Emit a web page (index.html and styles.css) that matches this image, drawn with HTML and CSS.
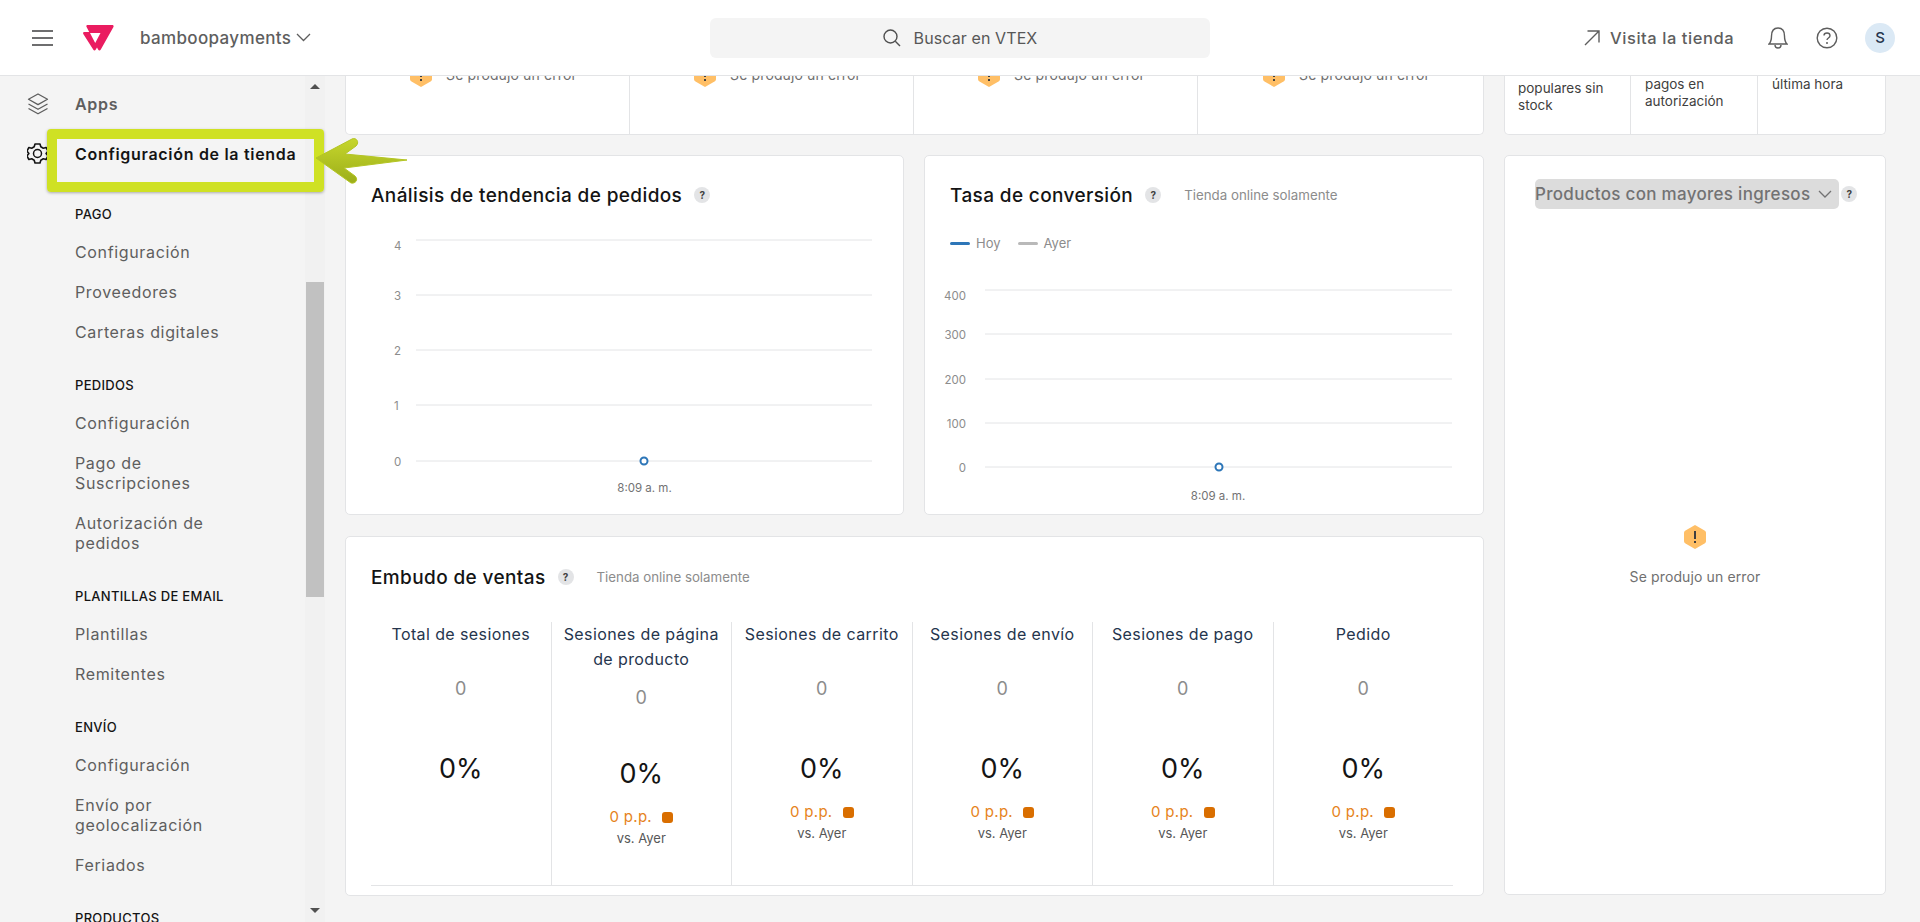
FILE: index.html
```html
<!DOCTYPE html>
<html lang="es">
<head>
    <meta charset="UTF-8">
    <meta name="viewport" content="width=device-width, initial-scale=1.0">
    <title>VTEX Admin</title>
    <link rel="stylesheet" href="styles.css">
</head>
<body>
    <!-- Top bar -->
    <header class="topbar">
        <div class="topbar-left">
            <svg class="menu-icon" width="22" height="16" viewBox="0 0 22 16"><path d="M0 1h21M0 8h21M0 15h21" stroke="#3f3f40" stroke-width="1.6" fill="none"/></svg>
            <svg class="logo" width="31" height="26" viewBox="0 0 31 26"><path fill-rule="evenodd" fill="#ea1c60" d="M4.5 0H29c1.5 0 2 1 1.300 2.300L17.800 24.500c-.8 1.400-2 1.300-2.700.1L14 22.500l-1.200 2.100c-.7 1.200-1.900 1.200-2.600 0L.3 9C-.2 8 .3 7 1.400 7h4.800L3.600 2C3.100 1 3.500 0 4.500 0zM7 8l5.200 10L17.500 8z"/></svg>
            <span class="brand">bamboopayments</span>
            <svg width="15" height="9" viewBox="0 0 15 9"><path d="M1 1l6.500 6.500L14 1" stroke="#5e5e5e" stroke-width="1.300" fill="none"/></svg>
        </div>
        <div class="search">
            <svg width="18" height="18" viewBox="0 0 18 18"><circle cx="7.500" cy="7.500" r="6.500" stroke="#4f4f4f" stroke-width="1.400" fill="none"/><path d="M12.300 12.300L17 17" stroke="#4f4f4f" stroke-width="1.400"/></svg>
            <span>Buscar en VTEX</span>
        </div>
        <div class="topbar-right">
            <a class="visit">
                <svg width="16" height="16" viewBox="0 0 16 16"><path d="M1 15L15 1M3.500 1H15v11.500" stroke="#5e5e5e" stroke-width="1.400" fill="none"/></svg>
                Visita la tienda
            </a>
            <svg class="bell" width="20" height="22" viewBox="0 0 20 22"><path d="M1 17c2-2 2.500-3.500 2.500-8C3.500 4 6 1 10 1s6.500 3 6.500 8c0 4.500.5 6 2.500 8zM7 18c0 4 6 4 6 0" stroke="#5e5e5e" stroke-width="1.400" fill="none"/></svg>
            <svg class="help" width="22" height="22" viewBox="0 0 22 22"><circle cx="11" cy="11" r="9.800" stroke="#5e5e5e" stroke-width="1.400" fill="none"/><path d="M8 8.500C8 6.500 9.500 6 11 6s3 1 3 2.700c0 2.300-3 2.300-3 4.300" stroke="#5e5e5e" stroke-width="1.400" fill="none"/><circle cx="11" cy="16" r="1" fill="#5e5e5e"/></svg>
            <div class="avatar">S</div>
        </div>
    </header>

    <div class="layout">
        <!-- Side menu -->
        <aside class="sidebar">
            <nav class="side-menu">
                <div class="side-main">
                    <svg width="22" height="22" viewBox="0 0 22 22"><path d="M11 1l9.500 5.300L11 11.600 1.500 6.300zM1.500 11L11 16.300 20.500 11M1.500 15.500L11 20.800l9.500-5.300" stroke="#5e5e5e" stroke-width="1.300" fill="none" stroke-linejoin="round"/></svg>
                    <span>Apps</span>
                </div>
                <div class="side-main side-active">
                    <svg width="22" height="22" viewBox="0 0 22 22"><path d="M8.500 1.500h5l.8 2.800 2.500 1.400 2.800-.7 2 3.600-2 2.400 2 2.400-2 3.600-2.800-.7-2.500 1.400-.8 2.800h-5l-.8-2.800-2.500-1.400-2.800.7-2-3.600 2-2.400-2-2.400 2-3.600 2.800.7 2.500-1.400z" transform="translate(-.5 -.5)" stroke="#141414" stroke-width="1.600" fill="none" stroke-linejoin="round"/><circle cx="10.500" cy="10.500" r="4" stroke="#141414" stroke-width="1.500" fill="none"/></svg>
                    <span>Configuración de la tienda</span>
                </div>

                <h4 class="side-title">PAGO</h4>
                <a class="side-link">Configuración</a>
                <a class="side-link">Proveedores</a>
                <a class="side-link">Carteras digitales</a>

                <h4 class="side-title">PEDIDOS</h4>
                <a class="side-link">Configuración</a>
                <a class="side-link">Pago de<br>Suscripciones</a>
                <a class="side-link">Autorización de<br>pedidos</a>

                <h4 class="side-title">PLANTILLAS DE EMAIL</h4>
                <a class="side-link">Plantillas</a>
                <a class="side-link">Remitentes</a>

                <h4 class="side-title">ENVÍO</h4>
                <a class="side-link">Configuración</a>
                <a class="side-link">Envío por<br>geolocalización</a>
                <a class="side-link">Feriados</a>

                <h4 class="side-title">PRODUCTOS</h4>
            </nav>
            <div class="scrollbar">
                <span class="scroll-up"></span>
                <span class="scroll-thumb"></span>
                <span class="scroll-down"></span>
            </div>
        </aside>

        <main class="content">
            <div class="left-col">
                <!-- Cards cut off by the top bar -->
                <section class="card status-row">
                    <div class="status-cell"><svg class="warn" viewBox="0 0 22 24"><use href="#warn-shape"/></svg><span>Se produjo un error</span></div>
                    <div class="status-cell"><svg class="warn" viewBox="0 0 22 24"><use href="#warn-shape"/></svg><span>Se produjo un error</span></div>
                    <div class="status-cell"><svg class="warn" viewBox="0 0 22 24"><use href="#warn-shape"/></svg><span>Se produjo un error</span></div>
                    <div class="status-cell"><svg class="warn" viewBox="0 0 22 24"><use href="#warn-shape"/></svg><span>Se produjo un error</span></div>
                </section>

                <div class="chart-row">
                    <section class="card chart-card chart-orders">
                        <div class="card-head">
                            <h2>Análisis de tendencia de pedidos</h2>
                            <span class="hint">?</span>
                        </div>
                        <svg class="chart" width="556" height="245" viewBox="0 0 556 245">
                            <g class="grid">
                                <path d="M70 14H526M70 69H526M70 124H526M70 179H526M70 235H526"/>
                            </g>
                            <g class="axis">
                                <text x="48" y="24">4</text>
                                <text x="48" y="74">3</text>
                                <text x="48" y="129">2</text>
                                <text x="48" y="184">1</text>
                                <text x="48" y="240">0</text>
                            </g>
                            <circle class="dot" cx="298" cy="235" r="3.500"/>
                        </svg>
                        <div class="chart-time">8:09 a. m.</div>
                    </section>

                    <section class="card chart-card chart-conversion">
                        <div class="card-head">
                            <h2>Tasa de conversión</h2>
                            <span class="hint">?</span>
                            <span class="note">Tienda online solamente</span>
                        </div>
                        <div class="legend">
                            <span class="legend-item"><i class="swatch swatch-blue"></i>Hoy</span>
                            <span class="legend-item"><i class="swatch swatch-gray"></i>Ayer</span>
                        </div>
                        <svg class="chart" width="556" height="192" viewBox="0 0 556 192">
                            <g class="grid">
                                <path d="M60 6H527M60 50H527M60 95H527M60 139H527M60 183H527"/>
                            </g>
                            <g class="axis axis-end">
                                <text x="41" y="16">400</text>
                                <text x="41" y="55">300</text>
                                <text x="41" y="100">200</text>
                                <text x="41" y="144">100</text>
                                <text x="41" y="188">0</text>
                            </g>
                            <circle class="dot" cx="294" cy="183" r="3.500"/>
                        </svg>
                        <div class="chart-time">8:09 a. m.</div>
                    </section>
                </div>

                <section class="card funnel-card">
                    <div class="card-head">
                        <h2>Embudo de ventas</h2>
                        <span class="hint">?</span>
                        <span class="note">Tienda online solamente</span>
                    </div>
                    <div class="funnel">
                        <div class="funnel-col">
                            <h3>Total de sesiones</h3>
                            <div class="funnel-count">0</div>
                            <div class="funnel-pct">0%</div>
                        </div>
                        <div class="funnel-col funnel-col-tall">
                            <h3>Sesiones de página de producto</h3>
                            <div class="funnel-count">0</div>
                            <div class="funnel-pct">0%</div>
                            <div class="funnel-delta">0 p.p. <i></i></div>
                            <div class="funnel-vs">vs. Ayer</div>
                        </div>
                        <div class="funnel-col">
                            <h3>Sesiones de carrito</h3>
                            <div class="funnel-count">0</div>
                            <div class="funnel-pct">0%</div>
                            <div class="funnel-delta">0 p.p. <i></i></div>
                            <div class="funnel-vs">vs. Ayer</div>
                        </div>
                        <div class="funnel-col">
                            <h3>Sesiones de envío</h3>
                            <div class="funnel-count">0</div>
                            <div class="funnel-pct">0%</div>
                            <div class="funnel-delta">0 p.p. <i></i></div>
                            <div class="funnel-vs">vs. Ayer</div>
                        </div>
                        <div class="funnel-col">
                            <h3>Sesiones de pago</h3>
                            <div class="funnel-count">0</div>
                            <div class="funnel-pct">0%</div>
                            <div class="funnel-delta">0 p.p. <i></i></div>
                            <div class="funnel-vs">vs. Ayer</div>
                        </div>
                        <div class="funnel-col">
                            <h3>Pedido</h3>
                            <div class="funnel-count">0</div>
                            <div class="funnel-pct">0%</div>
                            <div class="funnel-delta">0 p.p. <i></i></div>
                            <div class="funnel-vs">vs. Ayer</div>
                        </div>
                    </div>
                </section>
            </div>

            <div class="right-col">
                <section class="card notes-row">
                    <div class="notes-cell notes-cell-low">populares sin<br>stock</div>
                    <div class="notes-cell">pagos en<br>autorización</div>
                    <div class="notes-cell">última hora</div>
                </section>
                <section class="card top-products">
                    <div class="products-head">
                        <div class="products-select">
                            Productos con mayores ingresos
                            <svg width="14" height="8" viewBox="0 0 14 8"><path d="M1 1l6 6 6-6" stroke="#727273" stroke-width="1.300" fill="none"/></svg>
                        </div>
                        <span class="hint">?</span>
                    </div>
                    <div class="products-error">
                        <svg class="warn" viewBox="0 0 22 24"><use href="#warn-shape"/></svg>
                        <span>Se produjo un error</span>
                    </div>
                </section>
            </div>
        </main>
    </div>

    <!-- Tutorial annotation over the screenshot -->
    <div class="callout"></div>
    <svg class="callout-arrow" width="96" height="50" viewBox="0 0 96 50">
        <defs>
            <linearGradient id="arrow-fill" x1="0" y1="0" x2="0" y2="1">
                <stop offset="0" stop-color="#c6d62c"/>
                <stop offset="1" stop-color="#9cae1a"/>
            </linearGradient>
        </defs>
        <path d="M1 22L37 3c4-2 8 3 4 7L30 18l62 6-63 8 11 8c4 4 0 8-4 7z" fill="url(#arrow-fill)" stroke="#b4c524" stroke-linejoin="round"/>
    </svg>

    <svg class="defs" width="0" height="0">
        <symbol id="warn-shape" viewBox="0 0 22 24">
            <path d="M11 0l9.500 5.500c1 .6 1.500 1.300 1.500 2.500v8c0 1.200-.5 1.900-1.500 2.500L11 24 1.500 18.500C.5 17.900 0 17.200 0 16V8c0-1.200.5-1.900 1.500-2.500z" fill="#ffbf66"/>
            <path d="M10 6h2v8h-2zM10 16h2v2h-2z" fill="#3f3f40"/>
        </symbol>
    </svg>
</body>
</html>
```

FILE: styles.css
```css
* {
    box-sizing: border-box;
}
body {
    margin: 0;
    height: 922px;
    overflow: hidden;
    font-family: Inter, "Liberation Sans", sans-serif;
    background-color: #f4f4f4;
    color: #3f3f40;
}
svg {
    flex: none;
    display: block;
}
.defs {
    position: absolute;
}

/* top bar */
.topbar {
    height: 76px;
    background-color: white;
    border-bottom: 1px solid #e3e4e6;
    display: flex;
    align-items: center;
    position: relative;
    z-index: 2;
}
.topbar-left {
    width: 710px;
    display: flex;
    align-items: center;
    padding-left: 32px;
}
.logo {
    margin-left: 29px;
}
.brand {
    margin-left: 26px;
    margin-right: 5px;
    font-size: 17px;
    font-weight: 500;
    letter-spacing: 0.350px;
    color: #5e5e5e;
}
.search {
    width: 500px;
    height: 40px;
    background-color: #f4f4f4;
    border-radius: 6px;
    display: flex;
    align-items: center;
    justify-content: center;
    gap: 13px;
    font-size: 16px;
    letter-spacing: 0.100px;
    color: #575757;
}
.topbar-right {
    flex: 1;
    display: flex;
    align-items: center;
    padding-left: 374px;
}
.visit {
    display: flex;
    align-items: center;
    gap: 10px;
    font-size: 16.500px;
    font-weight: 500;
    letter-spacing: 0.550px;
    color: #5e5e5e;
}
.bell {
    margin-left: 34px;
}
.help {
    margin-left: 28px;
}
.avatar {
    width: 30px;
    height: 30px;
    margin-left: 27px;
    border-radius: 50%;
    background-color: #dbe9f5;
    color: #25354d;
    font-size: 15px;
    font-weight: 500;
    text-align: center;
    line-height: 30px;
}

.layout {
    display: flex;
    height: 846px;
}

/* side menu */
.sidebar {
    width: 325px;
    flex: none;
    display: flex;
    overflow: hidden;
}
.side-menu {
    width: 305px;
    padding: 14px 0 0 27px;
}
.side-main {
    display: flex;
    align-items: center;
    gap: 26px;
    height: 28px;
    margin-bottom: 22px;
    font-size: 16px;
    font-weight: 600;
    letter-spacing: 0.700px;
    color: #5e5e5e;
    white-space: nowrap;
}
.side-active {
    margin-bottom: 38px;
    color: #141414;
}
.side-title {
    margin: 35px 0 20px 48px;
    font-size: 13px;
    line-height: 16px;
    font-weight: 500;
    letter-spacing: 0.300px;
    color: #141414;
}
.side-link {
    display: block;
    margin: 0 0 20px 48px;
    font-size: 16px;
    line-height: 20px;
    letter-spacing: 0.650px;
    color: #5e5e5e;
}
.scrollbar {
    width: 20px;
    background-color: #f1f1f1;
    position: relative;
}
.scroll-thumb {
    position: absolute;
    top: 206px;
    left: 1px;
    width: 18px;
    height: 315px;
    background-color: #c1c1c1;
}
.scroll-up,
.scroll-down {
    position: absolute;
    left: 5px;
    border-left: 5px solid transparent;
    border-right: 5px solid transparent;
}
.scroll-up {
    top: 8px;
    border-bottom: 5px solid #505050;
}
.scroll-down {
    bottom: 9px;
    border-top: 5px solid #505050;
}

/* main area */
.content {
    flex: 1;
    display: flex;
    gap: 20px;
    padding: 0 34px 0 20px;
    min-width: 0;
}
.card {
    background-color: white;
    border: 1px solid #e3e4e6;
    border-radius: 5px;
}
.left-col {
    width: 1139px;
    display: flex;
    flex-direction: column;
}
.right-col {
    width: 382px;
    display: flex;
    flex-direction: column;
}

.status-row {
    height: 59px;
    display: grid;
    grid-template-columns: 283px 284px 284px 1fr;
    border-top: none;
    border-radius: 0 0 5px 5px;
    overflow: hidden;
}
.status-cell {
    display: flex;
    justify-content: center;
    align-items: flex-start;
    gap: 14px;
    margin-top: -13px;
    padding-left: 12px;
    font-size: 14px;
    line-height: 24px;
    letter-spacing: 0.120px;
    color: #707070;
    border-left: 1px solid #e3e4e6;
    height: 80px;
}
.status-cell:first-child {
    border-left: none;
}
.warn {
    width: 22px;
    height: 24px;
}

.notes-row {
    height: 59px;
    display: grid;
    grid-template-columns: 125px 127px 1fr;
    border-top: none;
    border-radius: 0 0 5px 5px;
}
.notes-cell {
    padding: 0 0 0 14px;
    font-size: 13.500px;
    line-height: 17px;
    color: #3f3f40;
    border-left: 1px solid #e3e4e6;
}
.notes-cell:first-child {
    border-left: none;
    padding-left: 13px;
}
.notes-cell-low {
    padding-top: 4px;
}

.chart-row {
    display: grid;
    grid-template-columns: 559px 560px;
    gap: 20px;
    margin-top: 20px;
}
.chart-card {
    height: 360px;
    padding: 26px 0 0 25px;
    position: relative;
}
.card-head {
    display: flex;
    align-items: center;
    height: 26px;
}
.card-head h2 {
    margin: 0;
    font-size: 19px;
    font-weight: 500;
    letter-spacing: 0.375px;
    color: #141414;
}
.hint {
    width: 16px;
    height: 16px;
    margin-left: 12px;
    border-radius: 50%;
    background-color: #e3e4e6;
    font-size: 10px;
    font-weight: 700;
    line-height: 16px;
    text-align: center;
    color: #3f3f40;
}
.note {
    margin-left: 23px;
    font-size: 13.300px;
    color: #8c8c8c;
}
.chart {
    margin-left: -25px;
    margin-top: 18px;
}
.grid path {
    stroke: #e3e4e6;
    stroke-width: 1;
    fill: none;
}
.axis text {
    font-size: 11.500px;
    font-family: Inter, "Liberation Sans", sans-serif;
    fill: #8c8c8c;
}
.axis-end text {
    text-anchor: end;
}
.dot {
    fill: white;
    stroke: #2d76b8;
    stroke-width: 2;
}
.chart-time {
    position: absolute;
    left: 0;
    right: 0;
    text-align: center;
    font-size: 11.500px;
    color: #727273;
}
.chart-orders .chart-time {
    bottom: 19px;
    padding-left: 40px;
}
.chart-conversion .chart-time {
    bottom: 11px;
    padding-left: 28px;
}
.legend {
    display: flex;
    gap: 17px;
    margin-top: 27px;
}
.legend-item {
    display: flex;
    align-items: center;
    gap: 6px;
    font-size: 13px;
    color: #8c8c8c;
}
.swatch {
    width: 20px;
    height: 3px;
    border-radius: 2px;
}
.swatch-blue {
    background-color: #2d76b8;
}
.swatch-gray {
    background-color: #b9b9b9;
}
.chart-card .legend + .chart {
    margin-top: 33px;
}

/* funnel */
.funnel-card {
    height: 360px;
    margin-top: 21px;
    padding: 27px 30px 10px 25px;
}
.funnel {
    display: grid;
    grid-template-columns: 179.500px repeat(5, 1fr);
    margin-top: 32px;
    height: 264px;
    border-bottom: 1px solid #e3e4e6;
}
.funnel-col {
    border-left: 1px solid #e3e4e6;
    text-align: center;
}
.funnel-col:first-child {
    border-left: none;
}
.funnel-col h3 {
    margin: 0;
    min-height: 25px;
    padding: 0 10px;
    font-size: 16px;
    line-height: 25px;
    font-weight: 400;
    letter-spacing: 0.400px;
    color: #25354d;
}
.funnel-count {
    margin-top: 30px;
    font-size: 18px;
    line-height: 24px;
    color: #8c8c8c;
}
.funnel-pct {
    margin-top: 51px;
    font-size: 27px;
    line-height: 34px;
    color: #141414;
}
.funnel-delta {
    margin-top: 16px;
    display: flex;
    justify-content: center;
    align-items: center;
    gap: 10px;
    font-size: 15px;
    line-height: 20px;
    letter-spacing: 0.300px;
    color: #e68320;
}
.funnel-delta i {
    width: 11px;
    height: 11px;
    border-radius: 3px;
    background-color: #d96e00;
}
.funnel-vs {
    margin-top: 2px;
    font-size: 13px;
    line-height: 18px;
    color: #575757;
}
.funnel-col-tall .funnel-count {
    margin-top: 14px;
}
.funnel-col-tall .funnel-pct {
    margin-top: 47px;
}

/* products card */
.top-products {
    height: 740px;
    margin-top: 20px;
    padding: 23px 0 0 30px;
    display: flex;
    flex-direction: column;
}
.products-head {
    display: flex;
    align-items: center;
}
.products-head .hint {
    margin-left: 2px;
}
.products-select {
    display: flex;
    align-items: center;
    gap: 8px;
    height: 30px;
    padding: 0 7px 0 0;
    background-color: #dcdcdc;
    border-radius: 5px;
    font-size: 17px;
    font-weight: 500;
    letter-spacing: 0.300px;
    color: #727273;
    white-space: nowrap;
}
.products-error {
    margin-top: 316px;
    margin-left: -30px;
    display: flex;
    flex-direction: column;
    align-items: center;
    gap: 19px;
    font-size: 14px;
    letter-spacing: 0.120px;
    color: #707070;
}

/* green highlight and arrow */
.callout {
    position: absolute;
    left: 47px;
    top: 129px;
    width: 277px;
    height: 63px;
    border: 10px solid #cfe124;
    border-radius: 4px;
    box-shadow: 0 1px 3px rgba(0, 0, 0, 0.3);
    z-index: 3;
}
.callout-arrow {
    position: absolute;
    left: 315px;
    top: 136px;
    z-index: 4;
}
```
